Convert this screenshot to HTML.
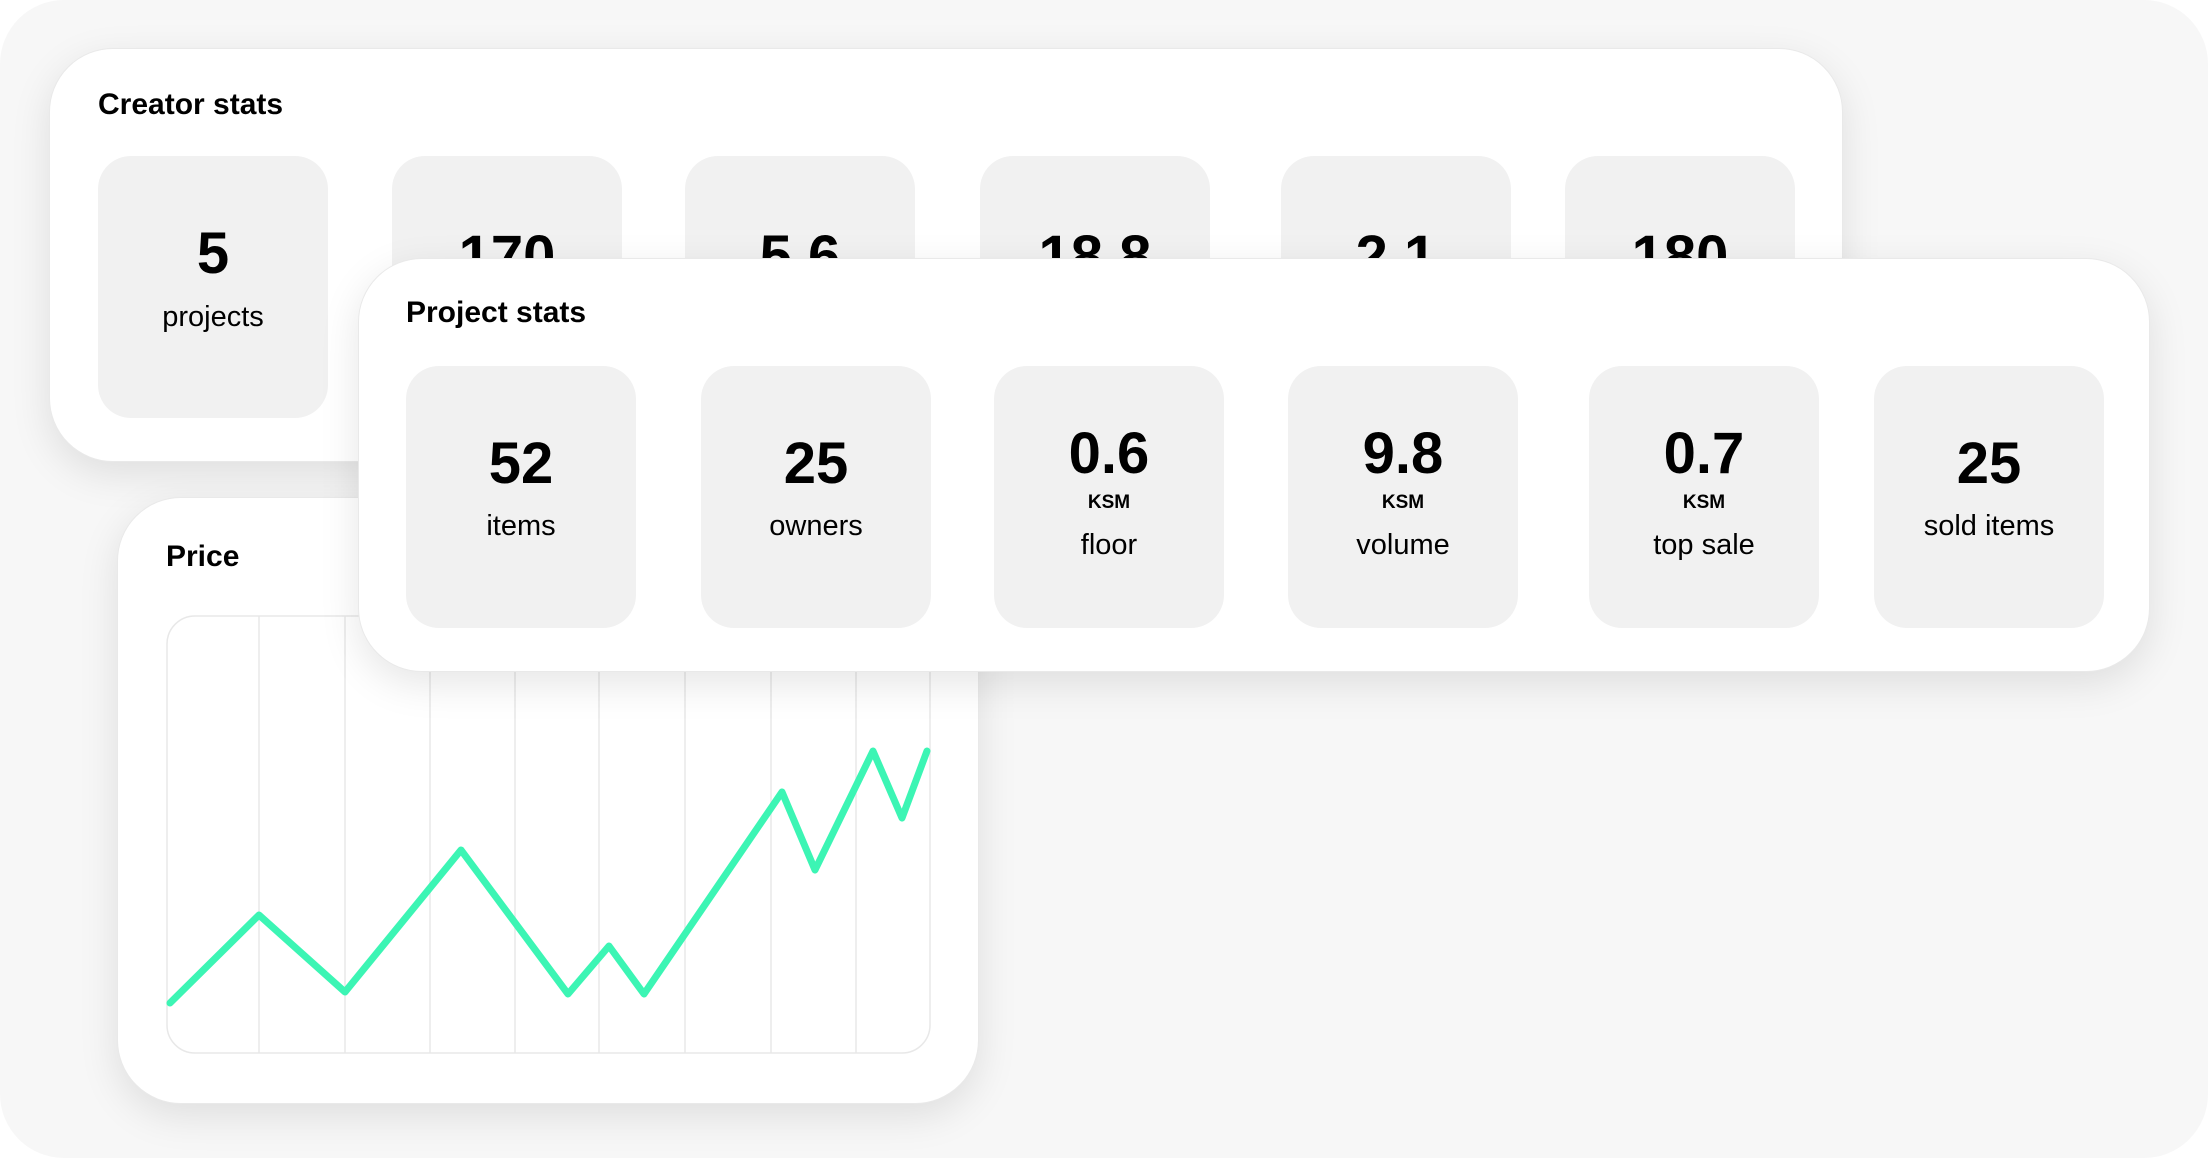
<!DOCTYPE html>
<html><head><meta charset="utf-8"><style>
*{margin:0;padding:0;box-sizing:border-box}
html,body{width:2208px;height:1158px;background:#fff;overflow:hidden;font-family:"Liberation Sans",Arial,sans-serif;color:#000}
.bg{position:absolute;left:0;top:0;width:2208px;height:1158px;background:#f7f7f7;border-radius:64px}
.card{position:absolute;background:#fff;border-radius:64px;border:1px solid #e9e9e9;box-shadow:0 12px 40px rgba(0,0,0,0.10)}
.t{position:absolute;white-space:nowrap;line-height:1}
.title{font-size:30px;font-weight:bold}
.tile{position:absolute;width:230px;background:#f1f1f1;border-radius:33px}
.c{position:absolute;left:0;width:230px;text-align:center;line-height:1;white-space:nowrap}
.num{font-size:58px;font-weight:bold}
.ksm{font-size:19px;font-weight:bold}
.lab{font-size:29px}
</style></head><body>
<div class="bg"></div>

<div class="card" style="left:49px;top:48px;width:1794px;height:414px;z-index:1">
  <div class="t title" style="left:48px;top:41px">Creator stats</div>
  <div class="tile" style="left:48px;top:107px;height:262px"><div class="c num" style="top:69px">5</div><div class="c lab" style="top:147px">projects</div></div>
  <div class="tile" style="left:342px;top:107px;height:262px"><div class="c num" style="top:72px">170</div></div>
  <div class="tile" style="left:635px;top:107px;height:262px"><div class="c num" style="top:72px">5.6</div></div>
  <div class="tile" style="left:930px;top:107px;height:262px"><div class="c num" style="top:72px">18.8</div></div>
  <div class="tile" style="left:1231px;top:107px;height:262px"><div class="c num" style="top:72px">2.1</div></div>
  <div class="tile" style="left:1515px;top:107px;height:262px"><div class="c num" style="top:72px">180</div></div>
</div>

<div class="card" style="left:117px;top:497px;width:862px;height:607px;z-index:2">
  <div class="t title" style="left:48px;top:44px">Price</div>
  <svg style="position:absolute;left:0;top:0" width="862" height="607">
    <g stroke="#e8e8e8" stroke-width="1.5" fill="none">
      <rect x="49" y="118" width="763" height="437" rx="28"/>
      <line x1="141" y1="118" x2="141" y2="555"/><line x1="227" y1="118" x2="227" y2="555"/>
      <line x1="312" y1="118" x2="312" y2="555"/><line x1="397" y1="118" x2="397" y2="555"/>
      <line x1="481" y1="118" x2="481" y2="555"/><line x1="567" y1="118" x2="567" y2="555"/>
      <line x1="653" y1="118" x2="653" y2="555"/><line x1="738" y1="118" x2="738" y2="555"/>
    </g>
    <polyline fill="none" stroke="#3cf5b4" stroke-width="7" stroke-linejoin="round" stroke-linecap="round"
      points="52,505 141,417 227,494 343,352 450,496 491,448 526,496 664,294 697,372 755,253 784,320 809,253"/>
  </svg>
</div>

<div class="card" style="left:358px;top:258px;width:1792px;height:414px;z-index:3">
  <div class="t title" style="left:47px;top:39px">Project stats</div>
  <div class="tile" style="left:47px;top:107px;height:262px"><div class="c num" style="top:69px">52</div><div class="c lab" style="top:146px">items</div></div>
  <div class="tile" style="left:342px;top:107px;height:262px"><div class="c num" style="top:69px">25</div><div class="c lab" style="top:146px">owners</div></div>
  <div class="tile" style="left:635px;top:107px;height:262px"><div class="c num" style="top:59px">0.6</div><div class="c ksm" style="top:127px">KSM</div><div class="c lab" style="top:165px">floor</div></div>
  <div class="tile" style="left:929px;top:107px;height:262px"><div class="c num" style="top:59px">9.8</div><div class="c ksm" style="top:127px">KSM</div><div class="c lab" style="top:165px">volume</div></div>
  <div class="tile" style="left:1230px;top:107px;height:262px"><div class="c num" style="top:59px">0.7</div><div class="c ksm" style="top:127px">KSM</div><div class="c lab" style="top:165px">top sale</div></div>
  <div class="tile" style="left:1515px;top:107px;height:262px"><div class="c num" style="top:69px">25</div><div class="c lab" style="top:146px">sold items</div></div>
</div>
</body></html>
